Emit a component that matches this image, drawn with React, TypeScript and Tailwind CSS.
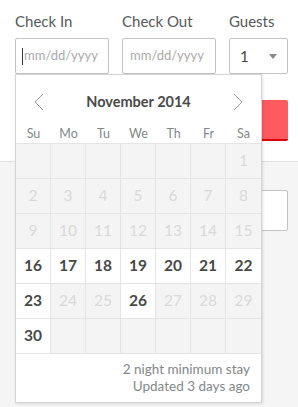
import React from "react";

const font = { fontFamily: "Lato, 'Liberation Sans', sans-serif" };

type Cell = { d?: number; on?: boolean };

export default function App() {
  // November 2014 starts on a Saturday
  const cells: Cell[] = [];
  for (let i = 0; i < 6; i++) cells.push({});
  for (let d = 1; d <= 30; d++) {
    const on = (d >= 16 && d <= 23) || d === 26 || d === 30;
    cells.push({ d, on });
  }
  while (cells.length < 42) cells.push({});

  return (
    <div className="relative w-[298px] h-[407px] overflow-hidden bg-[#f5f5f5]" style={font}>
      {/* top form */}
      <div className="bg-white h-[162px] border-b border-[#dce0e0] pl-[15px] pr-[10px] pt-[12px]">
        <div className="flex gap-[13px]">
          <div className="w-[94px] shrink-0">
            <div className="text-[15px] leading-[18px] text-[#565a5c] mb-[8px]">Check In</div>
            <div className="h-[36px] border border-[#c4c4c4] rounded-[2px] flex items-center pl-[6px] text-[13px] text-[#aaaaaa]">
              <span className="w-px h-[17px] bg-[#333] mr-[1px]" />
              mm/dd/yyyy
            </div>
          </div>
          <div className="w-[94px] shrink-0">
            <div className="text-[15px] leading-[18px] text-[#565a5c] mb-[8px]">Check Out</div>
            <div className="h-[36px] border border-[#c4c4c4] rounded-[2px] flex items-center pl-[7px] text-[13px] text-[#aaaaaa]">
              mm/dd/yyyy
            </div>
          </div>
          <div className="w-[59px] shrink-0">
            <div className="text-[15px] leading-[18px] text-[#565a5c] mb-[8px]">Guests</div>
            <div className="h-[36px] border border-[#c4c4c4] rounded-[2px] flex items-center justify-between pl-[10px] pr-[10px] text-[15px] text-[#484848]">
              1
              <span className="w-0 h-0 border-l-[4px] border-r-[4px] border-t-[5px] border-l-transparent border-r-transparent border-t-[#888]" />
            </div>
          </div>
        </div>
        <div className="mt-[26px] h-[41px] bg-[#ff5a5f] border-b-2 border-[#e00007] rounded-[2px]" />
      </div>

      <div className="pl-[15px] pr-[10px] pt-[28px]">
        <div className="h-[41px] bg-white border border-[#c4c4c4] rounded-[2px]" />
      </div>

      {/* date picker popup */}
      <div className="absolute left-[15px] top-[74px] w-[247px] bg-white border border-[#d4d4d4] shadow-[1px_1px_3px_rgba(0,0,0,0.12)]">
        <div className="h-[51px] flex items-center justify-between px-[17px] pt-[2px]">
          <svg width="11" height="18" viewBox="0 0 11 18" fill="none">
            <path d="M10 1L2 9l8 8" stroke="#9a9a9a" strokeWidth="1" />
          </svg>
          <span className="text-[14.5px] font-bold text-[#4a4a4a]">November 2014</span>
          <svg width="11" height="18" viewBox="0 0 11 18" fill="none">
            <path d="M1 1l8 8-8 8" stroke="#9a9a9a" strokeWidth="1" />
          </svg>
        </div>
        <div className="grid grid-cols-[repeat(7,35px)] h-[17px] text-[12.5px] text-[#82888a] text-center leading-[15px]">
          {["Su", "Mo", "Tu", "We", "Th", "Fr", "Sa"].map((n) => (
            <span key={n}>{n}</span>
          ))}
        </div>
        <div className="grid grid-cols-[repeat(7,35px)] border-t border-[#e4e4e4]">
          {cells.map((c, i) => (
            <div
              key={i}
              className={
                "h-[35px] flex items-center justify-center border-b border-[#e4e4e4] text-[15.5px] " +
                (i % 7 !== 6 ? "border-r " : "") +
                (c.on ? "bg-white text-[#484848] font-bold" : "bg-[#f4f4f4] text-[#d9d9d9]")
              }
            >
              {c.d ?? ""}
            </div>
          ))}
        </div>
        <div className="text-right pr-[11px] pt-[7px] pb-[7px] text-[13.5px] leading-[17px] text-[#82888a]">
          <div>2 night minimum stay</div>
          <div>Updated 3 days ago</div>
        </div>
      </div>
    </div>
  );
}
